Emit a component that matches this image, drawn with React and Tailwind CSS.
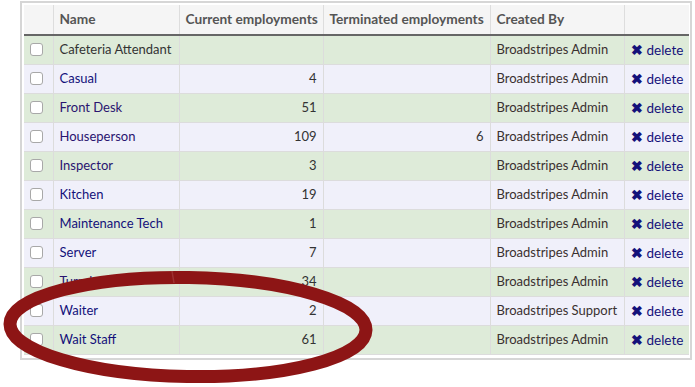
import React from "react";

const rows = [
  { name: "Cafeteria Attendant", cur: "", term: "", by: "Broadstripes Admin", link: false },
  { name: "Casual", cur: "4", term: "", by: "Broadstripes Admin", link: true },
  { name: "Front Desk", cur: "51", term: "", by: "Broadstripes Admin", link: true, visited: true },
  { name: "Houseperson", cur: "109", term: "6", by: "Broadstripes Admin", link: true, visited: true },
  { name: "Inspector", cur: "3", term: "", by: "Broadstripes Admin", link: true, visited: true },
  { name: "Kitchen", cur: "19", term: "", by: "Broadstripes Admin", link: true },
  { name: "Maintenance Tech", cur: "1", term: "", by: "Broadstripes Admin", link: true },
  { name: "Server", cur: "7", term: "", by: "Broadstripes Admin", link: true },
  { name: "Turndown", cur: "34", term: "", by: "Broadstripes Admin", link: true, visited: true },
  { name: "Waiter", cur: "2", term: "", by: "Broadstripes Support", link: true },
  { name: "Wait Staff", cur: "61", term: "", by: "Broadstripes Admin", link: true },
];

export default function App() {
  return (
    <div className="relative w-[695px] h-[387px] bg-white overflow-hidden" style={{ fontFamily: "Lato, 'Open Sans', sans-serif" }}>
      <div className="ml-[20px] mt-[1px] w-[672px] border-2 border-[#d6d6d6] pl-[2px] pt-[2px] pb-[3px]">
        <table className="border-collapse table-fixed w-[665px] text-[13px] text-[#333]">
          <colgroup>
            <col className="w-[29px]" />
            <col className="w-[126px]" />
            <col className="w-[144px]" />
            <col className="w-[167px]" />
            <col className="w-[134px]" />
            <col className="w-[65px]" />
          </colgroup>
          <thead>
            <tr className="h-[30px] bg-[#f5f5f5] border-b-2 border-[#666] text-[13.7px]">
              <th className="border-r border-[#ddd]"></th>
              <th className="text-left font-bold text-[#555] px-[6px] border-r border-[#ddd]">Name</th>
              <th className="text-left font-bold text-[#555] px-[6px] border-r border-[#ddd] whitespace-nowrap">Current employments</th>
              <th className="text-left font-bold text-[#555] px-[6px] border-r border-[#ddd] whitespace-nowrap">Terminated employments</th>
              <th className="text-left font-bold text-[#555] px-[6px] border-r border-[#ddd]">Created By</th>
              <th></th>
            </tr>
          </thead>
          <tbody>
            {rows.map((r, i) => (
              <tr key={r.name} className={(i % 2 === 0 ? "bg-[#deebd9]" : "bg-[#f0f0fa]") + " h-[29px] border-b border-[#dcdcdc]"}>
                <td className="border-r border-[#dcdcdc] pl-[6px]">
                  <div className="w-[13px] h-[13px] rounded-[3px] border border-[#a8a8a8] bg-white"></div>
                </td>
                <td className={"px-[6px] border-r border-[#dcdcdc] whitespace-nowrap " + (r.link ? (r.visited ? "text-[#2a1470]" : "text-[#13107a]") : "text-[#333]")}>{r.name}</td>
                <td className="px-[6px] text-right border-r border-[#dcdcdc]">{r.cur}</td>
                <td className="px-[6px] text-right border-r border-[#dcdcdc]">{r.term}</td>
                <td className="px-[6px] border-r border-[#dcdcdc] whitespace-nowrap text-[#3a3030]">{r.by}</td>
                <td className="pl-[6px] whitespace-nowrap text-[#14117a] text-[13.5px]">
                  <span className="font-bold text-[14px] mr-[4px]">✖</span>delete
                </td>
              </tr>
            ))}
          </tbody>
        </table>
      </div>
      <svg className="absolute left-0 top-0 pointer-events-none" width="695" height="387" viewBox="0 0 695 387">
        <ellipse cx="188" cy="327" rx="178" ry="49.5" fill="none" stroke="#8d1515" strokeWidth="13" transform="rotate(1 188 327)" />
        <line x1="172" y1="271" x2="174" y2="283" stroke="#a84545" strokeWidth="1.5" opacity="0.6" />
      </svg>
    </div>
  );
}
